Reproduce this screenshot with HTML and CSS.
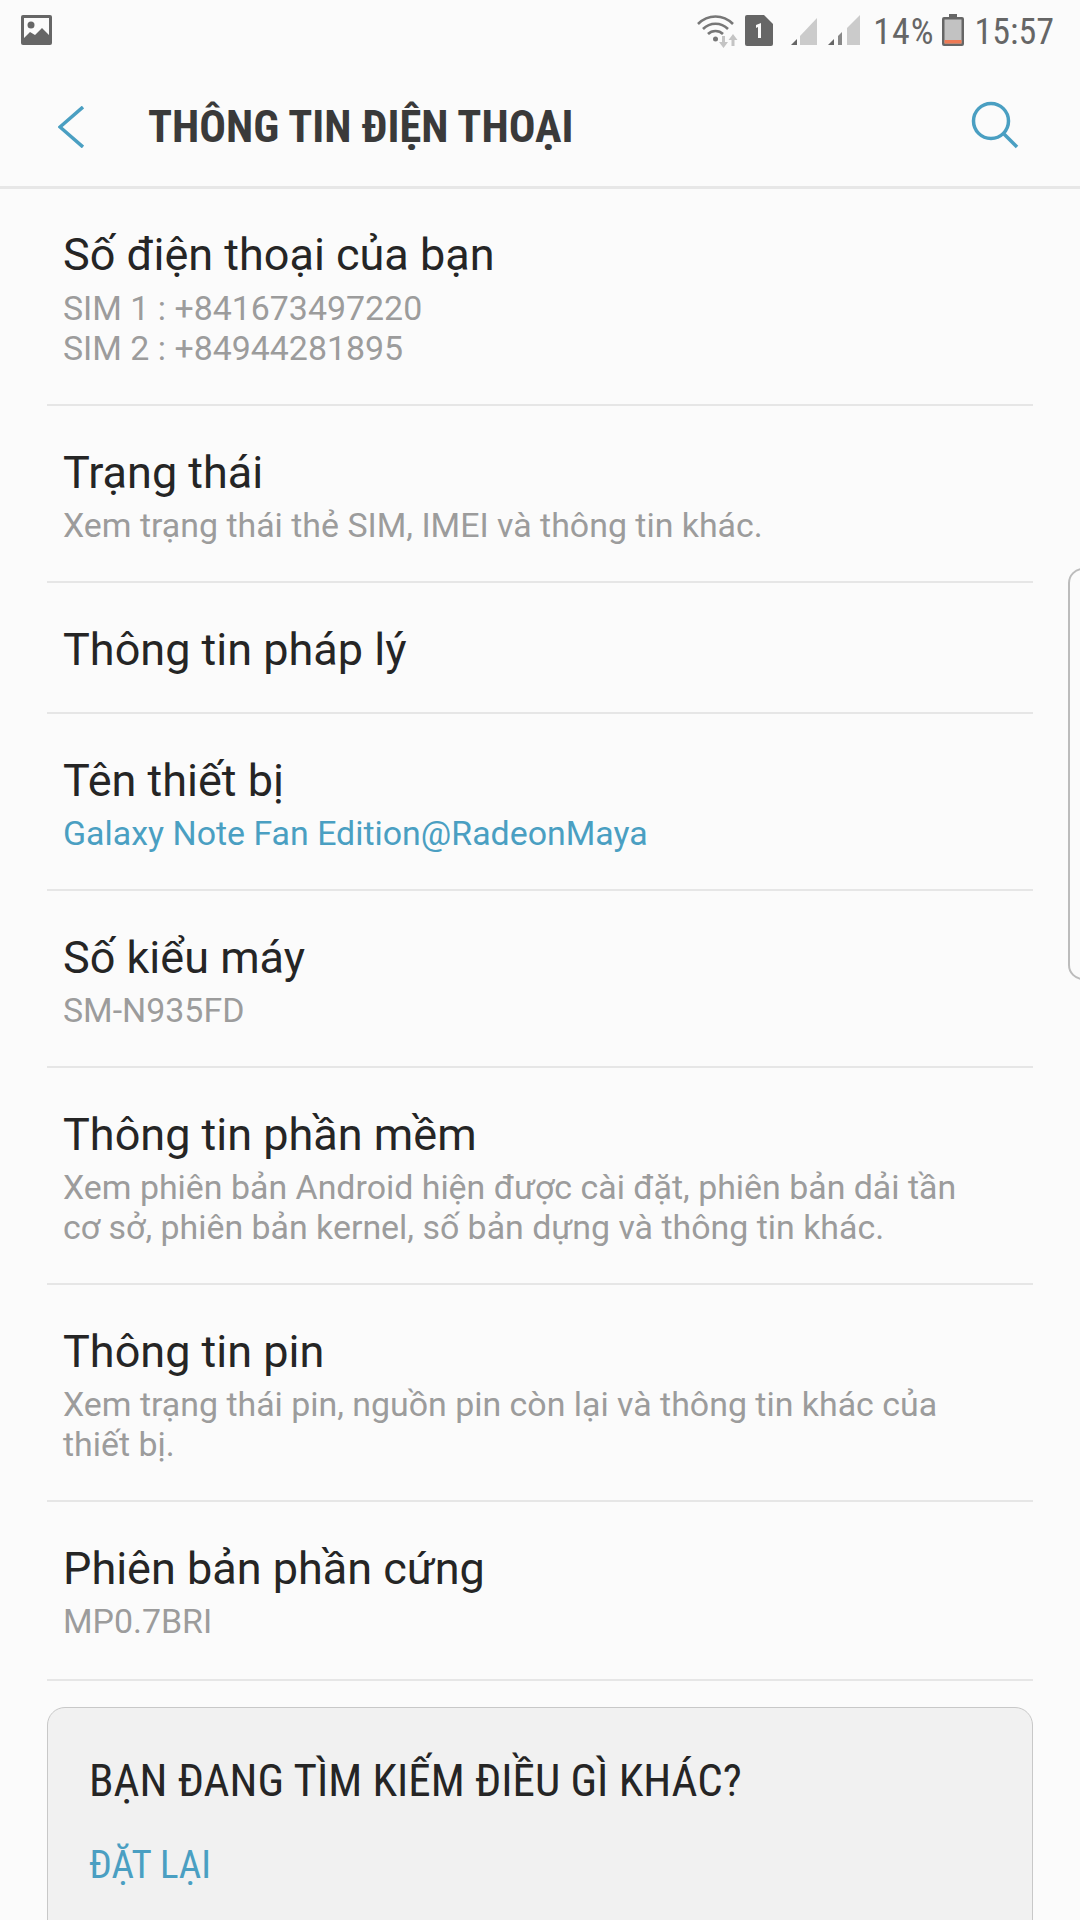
FILE: index.html
```html
<!DOCTYPE html>
<html lang="vi">
<head>
<meta charset="utf-8">
<title>Thông tin điện thoại</title>
<link rel="stylesheet" href="styles.css">
</head>
<body>
<div class="screen">
  <div class="status">
    <svg class="ic-image" viewBox="0 0 31 30"><rect width="31" height="30" rx="2" fill="#666"/><rect x="3" y="3" width="25" height="24" fill="#fbfbfb"/><circle cx="10" cy="10" r="3.5" fill="#666"/><path d="M3 23l6-6 5 3 7-7 7 7v13H3z" fill="#666"/></svg>
    <div class="status-right">
      <svg class="ic-wifi" viewBox="0 0 44 34"><g fill="none" stroke="#777" stroke-width="2.6"><path d="M1 10C11 0 26 0 36 10"/><path d="M6 15c7-7 18-7 25 0"/><path d="M11 20c4-4 11-4 15 0"/></g><circle cx="18.500" cy="25" r="2.500" fill="#777"/><path d="M25 22h3v6h3l-4.500 6-4.500-6h3zM36 20l4.500 6h-3v6h-3v-6h-3z" fill="#c4c4c4"/></svg>
      <svg class="ic-sim" viewBox="0 0 28 31"><path d="M2 0h17l9 9v20a2 2 0 0 1-2 2H2a2 2 0 0 1-2-2V2a2 2 0 0 1 2-2z" fill="#666"/><path d="M11 10l5-2v15h-3V12l-2 1z" fill="#fbfbfb"/></svg>
      <svg class="ic-sig1" viewBox="0 0 26 30"><path d="M0 30l6-6v6z" fill="#666"/><path d="M9 21L26 3v27H9z" fill="#cbcbcb"/></svg>
      <svg class="ic-sig2" viewBox="0 0 32 30"><path d="M0 30l6-6v6z" fill="#666"/><path d="M10 21l4-4v13h-4z" fill="#888"/><path d="M19 13L32 0v30H19z" fill="#cbcbcb"/></svg>
      <span class="status-text pct">14%</span>
      <svg class="ic-batt" viewBox="0 0 22 32"><path d="M7 0h8v3h5a2 2 0 0 1 2 2v25a2 2 0 0 1-2 2H2a2 2 0 0 1-2-2V5a2 2 0 0 1 2-2h5z" fill="#666"/><rect x="2.500" y="5.500" width="17" height="24" fill="#c2c2c2"/><rect x="2.500" y="26" width="17" height="3.500" fill="#ee7a55"/></svg>
      <span class="status-text">15:57</span>
    </div>
  </div>

  <header class="appbar">
    <svg class="ic-back" viewBox="0 0 26 42"><path d="M25 1L2 21l23 20" fill="none" stroke="#4a9fc2" stroke-width="3.500"/></svg>
    <h1 class="appbar-title">THÔNG TIN ĐIỆN THOẠI</h1>
    <svg class="ic-search" viewBox="0 0 48 48"><circle cx="20" cy="20" r="17.500" fill="none" stroke="#4a9fc2" stroke-width="3.500"/><path d="M32 32l14 14" stroke="#4a9fc2" stroke-width="3.500"/></svg>
  </header>

  <main class="list">
    <div class="row row-first">
      <div class="row-title">Số điện thoại của bạn</div>
      <div class="row-sub">SIM 1 : +841673497220<br>SIM 2 : +84944281895</div>
    </div>
    <div class="row">
      <div class="row-title">Trạng thái</div>
      <div class="row-sub">Xem trạng thái thẻ SIM, IMEI và thông tin khác.</div>
    </div>
    <div class="row row-plain">
      <div class="row-title">Thông tin pháp lý</div>
    </div>
    <div class="row">
      <div class="row-title">Tên thiết bị</div>
      <div class="row-sub accent">Galaxy Note Fan Edition@RadeonMaya</div>
    </div>
    <div class="row">
      <div class="row-title">Số kiểu máy</div>
      <div class="row-sub">SM-N935FD</div>
    </div>
    <div class="row">
      <div class="row-title">Thông tin phần mềm</div>
      <div class="row-sub">Xem phiên bản Android hiện được cài đặt, phiên bản dải tần<br>cơ sở, phiên bản kernel, số bản dựng và thông tin khác.</div>
    </div>
    <div class="row">
      <div class="row-title">Thông tin pin</div>
      <div class="row-sub">Xem trạng thái pin, nguồn pin còn lại và thông tin khác của<br>thiết bị.</div>
    </div>
    <div class="row row-last">
      <div class="row-title">Phiên bản phần cứng</div>
      <div class="row-sub">MP0.7BRI</div>
    </div>
  </main>

  <section class="card">
    <div class="card-title">BẠN ĐANG TÌM KIẾM ĐIỀU GÌ KHÁC?</div>
    <div class="card-link">ĐẶT LẠI</div>
  </section>

  <div class="edge-handle"></div>
</div>
</body>
</html>
```

FILE: styles.css
```css
* { box-sizing: border-box; }
html, body { margin: 0; padding: 0; }
body { background: #fbfbfb; font-family: Roboto, "Noto Sans", sans-serif; }
.screen { position: relative; width: 1080px; height: 1920px; overflow: hidden; background: #fbfbfb; }

.status { height: 60px; display: flex; align-items: flex-start; justify-content: space-between; padding: 14px 26px 0 21px; }
.status-right { display: flex; align-items: flex-start; }
.ic-image { width: 31px; height: 30px; margin-top: 1px; display: block; }
.ic-wifi { width: 44px; height: 34px; margin-right: 4px; }
.ic-sim { width: 28px; height: 31px; margin-top: 1px; margin-right: 18px; }
.ic-sig1 { width: 26px; height: 30px; margin-top: 1px; margin-right: 11px; }
.ic-sig2 { width: 32px; height: 30px; margin-top: 1px; margin-right: 13px; }
.ic-batt { width: 22px; height: 32px; margin: 0 11px 0 7px; }
.status-text { font-size: 36px; line-height: 36px; color: #666; font-stretch: 75%; }
.pct { letter-spacing: 1px; }

.appbar { height: 129px; display: flex; align-items: flex-start; padding: 46px 61px 0 58px; border-bottom: 3px solid #e7e7e7; }
.ic-back { width: 26px; height: 42px; flex: none; }
.appbar-title { margin: 0 0 0 64px; font-size: 44.4px; line-height: 42px; font-weight: 700; color: #3a3a3a; white-space: nowrap; font-stretch: 75%; flex: 1; }
.ic-search { width: 48px; height: 48px; flex: none; margin-top: -5px; }

.list { padding: 0 47px; }
.row { padding: 36px 16px 30px; border-bottom: 2px solid #e6e6e6; }
.row-first { padding: 35px 16px 30px; }
.row-plain { padding: 36px 16px 31px; }
.row-last { padding-bottom: 32px; }
.row-title { font-size: 45px; line-height: 62px; color: #252525; }
.row-sub { font-size: 33.9px; line-height: 40px; margin: 2px 0 5px; color: #9c9c9c; }
.row-first .row-sub { margin: 3px 0 4.5px; }
.accent { color: #4a9fc2; }

.card { margin: 26px 47px 0; height: 300px; background: #f1f1f1; border: 1px solid #c8c8c8; border-radius: 18px; padding: 43px 41px; }
.card-title { font-size: 45px; line-height: 60px; color: #252525; white-space: nowrap; font-stretch: 75%; }
.card-link { margin-top: 29px; font-size: 39px; line-height: 50px; color: #4a9fc2; white-space: nowrap; font-stretch: 75%; }

.edge-handle { position: absolute; left: 1068px; top: 568px; width: 30px; height: 412px; border: 2px solid #bcbcbc; border-radius: 18px; }
```
